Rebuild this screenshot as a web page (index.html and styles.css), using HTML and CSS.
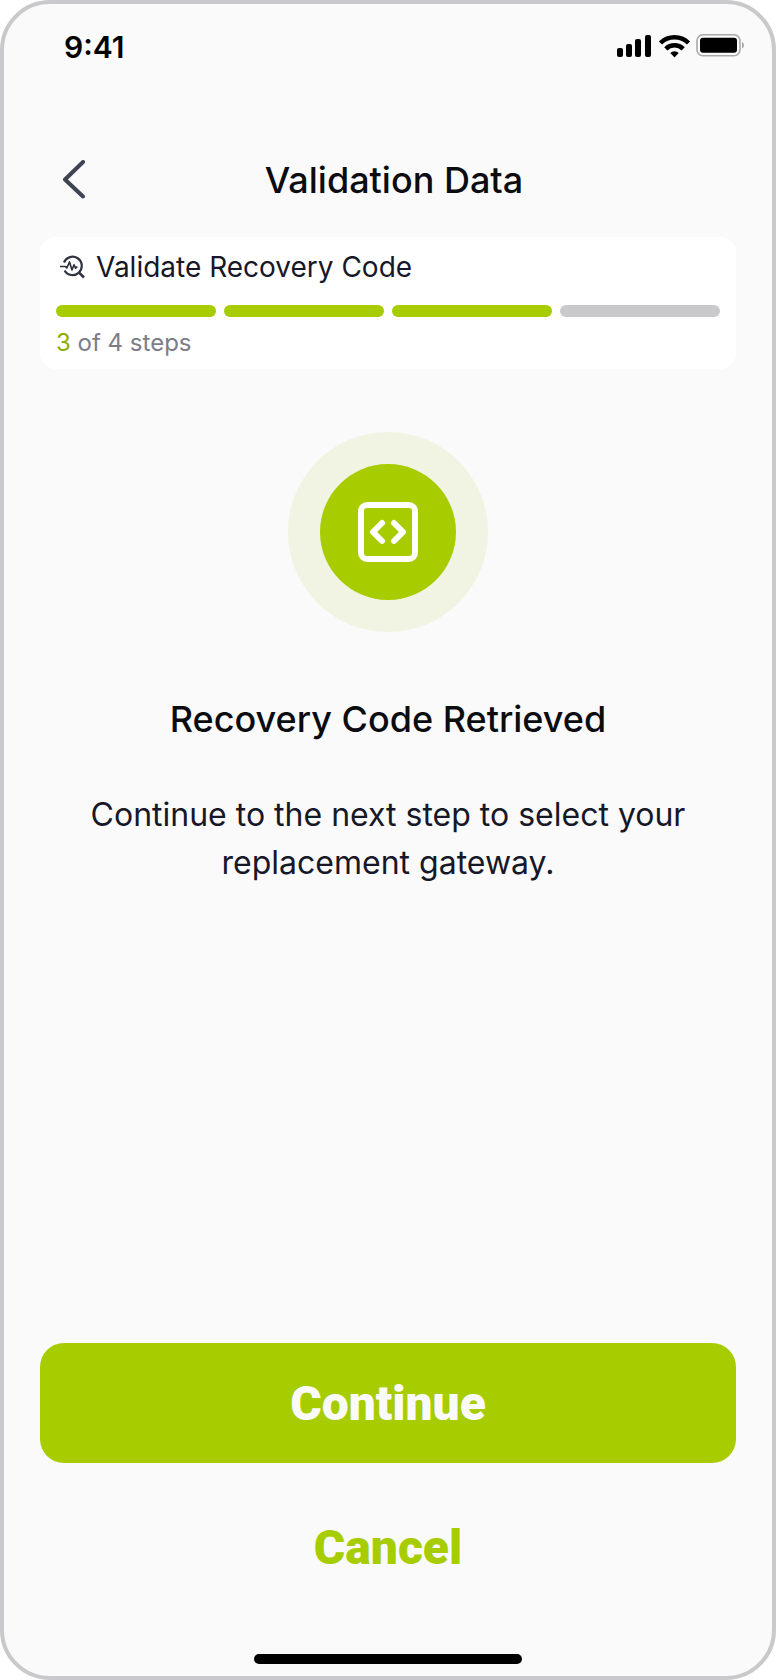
FILE: index.html
```
<!DOCTYPE html>
<html lang="en">
<head>
    <meta charset="UTF-8">
    <meta name="viewport" content="width=device-width, initial-scale=1.0">
    <title>Validation Data</title>
    <link rel="stylesheet" href="styles.css">
</head>
<body>
    <div class="screen">
        <div class="status-bar">
            <span class="time">9:41</span>
            <svg class="status-icons" width="130" height="26" viewBox="0 0 130 26" aria-hidden="true">
                <!-- signal -->
                <rect x="1" y="14" width="6" height="9" rx="2"/>
                <rect x="10" y="10" width="6" height="13" rx="2"/>
                <rect x="19" y="5" width="6" height="18" rx="2"/>
                <rect x="29" y="1" width="6" height="22" rx="2"/>
                <!-- wifi -->
                <g fill="none" stroke="#000" stroke-width="4.500">
                    <path d="M44.500 9a20 20 0 0 1 28 0"/>
                    <path d="M49.800 14.800a12.500 12.500 0 0 1 17.400 0"/>
                </g>
                <path d="M54.300 19a6 6 0 0 1 8.400 0L58.500 23.500z"/>
                <!-- battery -->
                <rect x="81" y="0.800" width="43" height="21" rx="6" fill="none" stroke="#a9a9a9" stroke-width="1.600"/>
                <rect x="84" y="3.800" width="37" height="15" rx="3"/>
                <path d="M126 8c2.600 1.200 2.600 5.300 0 6.500z" fill="#a9a9a9"/>
            </svg>
        </div>

        <header class="header">
            <button class="back-btn" type="button" aria-label="Back">
                <svg width="24" height="40" viewBox="0 0 24 40">
                    <path d="M21 2L3 19.500L21 36.500" fill="none" stroke="#3e4451" stroke-width="4" stroke-linecap="round" stroke-linejoin="round"/>
                </svg>
            </button>
            <h1>Validation Data</h1>
        </header>

        <section class="card">
            <div class="card-title">
                <svg width="26" height="24" viewBox="0 0 26 24" fill="none" stroke="#2f3440" aria-hidden="true">
                    <path d="M4 7.500A9.200 9.200 0 1 1 4.600 15.500" stroke-width="2.200"/>
                    <path d="M18.800 17.300L24 22.500" stroke-width="2.600"/>
                    <path d="M0 11.500H5.500L6.800 13L9.500 7L12 15L14 9.800L15.600 13.200L17.300 11.500" stroke-width="1.700" stroke-linejoin="round"/>
                </svg>
                <h2>Validate Recovery Code</h2>
            </div>
            <div class="steps">
                <span class="step done"></span>
                <span class="step done"></span>
                <span class="step done"></span>
                <span class="step"></span>
            </div>
            <p class="step-count"><span class="current">3</span> of 4 steps</p>
        </section>

        <main class="content">
            <div class="badge">
                <div class="badge-inner">
                    <svg width="60" height="60" viewBox="0 0 60 60" fill="none" stroke="#fff" stroke-width="6" aria-hidden="true">
                        <rect x="3" y="3" width="54" height="54" rx="6"/>
                        <path d="M24 21L15 30L24 39M36 21L45 30L36 39" stroke-linecap="round" stroke-linejoin="round"/>
                    </svg>
                </div>
            </div>
            <h2 class="content-title">Recovery Code Retrieved</h2>
            <p class="content-text">Continue to the next step to select your replacement gateway.</p>
        </main>

        <div class="actions">
            <button class="btn btn-primary" type="button">Continue</button>
            <button class="btn btn-link" type="button">Cancel</button>
        </div>

        <div class="home-bar"></div>
    </div>
</body>
</html>
```

FILE: styles.css
```
* {
    box-sizing: border-box;
}
body {
    margin: 0;
    font-family: "Inter", sans-serif;
    background: #fff;
    color: #161827;
}
h1, h2, p {
    margin: 0;
}
button {
    border: none;
    background: none;
    padding: 0;
    cursor: pointer;
}
svg {
    display: block;
}
.screen {
    display: flex;
    flex-direction: column;
    min-height: 100vh;
    padding: 0 36px 12px;
    background: #fafafa;
    border: 4px solid #c9c9cb;
    border-radius: 50px;
}
.status-bar {
    display: flex;
    justify-content: space-between;
    align-items: center;
    padding: 23px 0 0 24px;
    margin-right: -10px;
}
.time {
    font-size: 30px;
    line-height: 40px;
    font-weight: 600;
    color: #000;
}
.header {
    display: flex;
    align-items: center;
    margin-top: 89px;
    padding: 0 20px 0 22px;
}
.back-btn {
    width: 26px;
}
.header h1 {
    flex: 1;
    padding-right: 16px;
    font-size: 36px;
    line-height: 48px;
    font-weight: 500;
    text-align: center;
    color: #0b0c10;
}
.card {
    margin-top: 33px;
    padding: 12px 16px 10px;
    background: #fff;
    border-radius: 16px;
}
.card-title {
    display: flex;
    align-items: center;
    gap: 10px;
    padding-left: 4px;
}
.card-title h2 {
    font-size: 28px;
    line-height: 36px;
    font-weight: 400;
}
.steps {
    display: flex;
    gap: 8px;
    margin-top: 20px;
}
.step {
    flex: 1;
    height: 12px;
    border-radius: 6px;
    background: #c9c9cb;
}
.step.done {
    background: #a7cd00;
}
.step-count {
    margin-top: 10px;
    font-size: 24px;
    line-height: 32px;
    color: #7c7d86;
}
.current {
    color: #8dae00;
}
.content {
    flex: 1;
    display: flex;
    flex-direction: column;
    align-items: center;
    padding-top: 63px;
    text-align: center;
}
.badge {
    display: flex;
    padding: 32px;
    border-radius: 50%;
    background: #f1f4e3;
}
.badge-inner {
    padding: 38px;
    border-radius: 50%;
    background: #a7cd00;
}
.content-title {
    margin-top: 63px;
    font-size: 36px;
    line-height: 48px;
    font-weight: 500;
    color: #0b0c10;
}
.content-text {
    max-width: 640px;
    margin-top: 48px;
    font-size: 32px;
    line-height: 48px;
}
.actions {
    display: flex;
    flex-direction: column;
    gap: 24px;
}
.btn {
    width: 100%;
    height: 120px;
    border-radius: 24px;
    font-family: "Roboto", sans-serif;
    font-size: 48px;
    font-weight: 900;
}
.btn-primary {
    background: #a7cd00;
    color: #fafafa;
}
.btn-link {
    color: #a7cd00;
}
.home-bar {
    width: 268px;
    height: 10px;
    margin: 47px auto 0;
    border-radius: 5px;
    background: #000;
}
```
